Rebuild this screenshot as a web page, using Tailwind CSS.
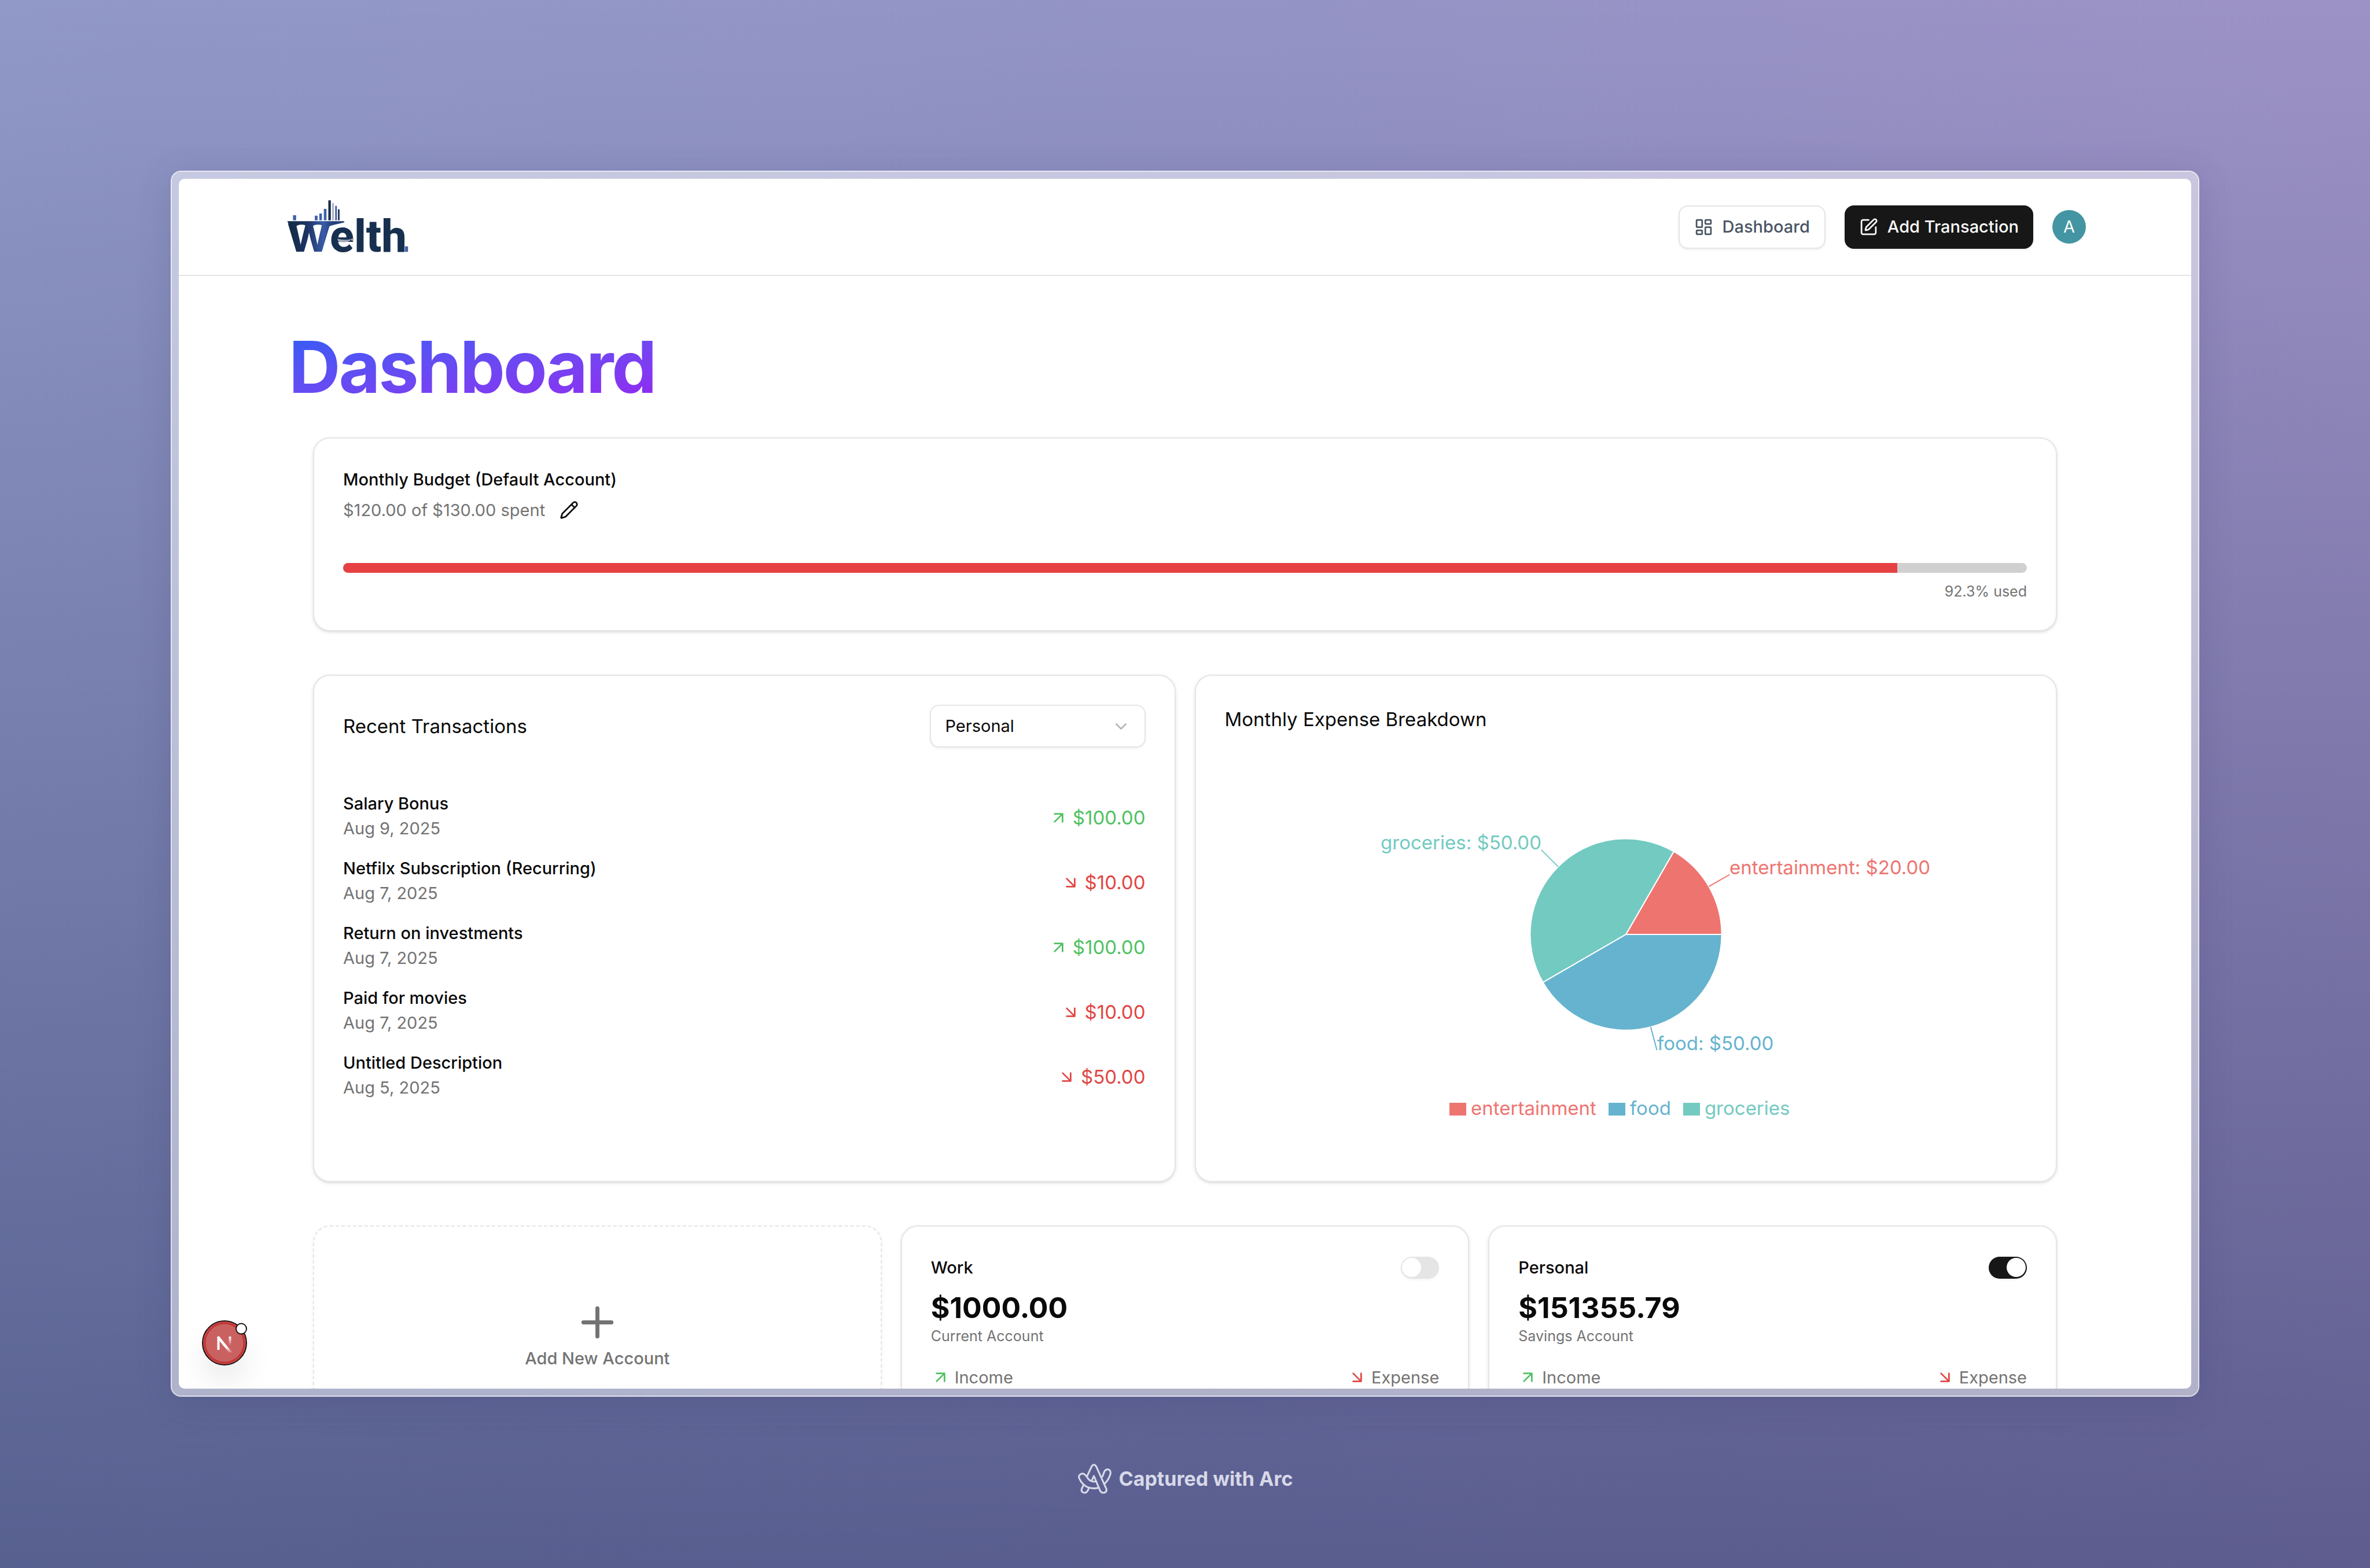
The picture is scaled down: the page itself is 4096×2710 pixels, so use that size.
<!DOCTYPE html>
<html lang="en">
<head>
<meta charset="utf-8">
<title>Welth – Dashboard</title>
<script src="https://cdn.jsdelivr.net/npm/@tailwindcss/browser@4"></script>
</head>
<body class="font-['Inter',sans-serif] text-[#0a0a0a]">
<svg class="hidden">
  <symbol id="up-right" viewBox="0 0 24 24"><path d="M7 7h10v10M7 17 17 7"/></symbol>
  <symbol id="down-right" viewBox="0 0 24 24"><path d="m7 7 10 10M17 7v10H7"/></symbol>
</svg>
<div class="grid h-screen grid-rows-[295px_minmax(0,1fr)_296px] bg-[linear-gradient(to_bottom,rgb(0_12_60/0),rgb(0_12_60/0.4)),linear-gradient(to_right,#9199c8,#9494c6_50%,#9d92c6)] px-[295px]">
  <div class="row-start-2 rounded-[18px] border-2 border-white/80 bg-white/50 bg-clip-padding p-3 shadow-[0_10px_60px_rgb(60_60_110/0.2)]">
    <div class="relative flex h-full flex-col overflow-hidden rounded-[10px] bg-white">

      <header class="border-b-2 border-[#e5e5e5]">
        <nav class="flex h-[166px] items-center justify-between px-[182px]">
          <a href="#" aria-label="Welth home" class="-ml-2">
            <svg class="h-[113px] w-[234px]" viewBox="0 0 870 420">
              <defs>
                <linearGradient id="w" x1="52" y1="0" x2="340" y2="0" gradientUnits="userSpaceOnUse">
                  <stop offset="0.1" stop-color="#152b4a"/><stop offset="0.45" stop-color="#1d3566"/><stop offset="0.8" stop-color="#3a5ba8"/><stop offset="1" stop-color="#24417a"/>
                </linearGradient>
              </defs>
              <g fill="#3f62a8"><path d="M87 134h20v32H87zM227 137h18v29h-18zM256 123h17v43h-17zM285 93h17v73h-17zM358 73h11v93h-11z"/></g>
              <path fill="#152b4a" d="M314 38h16v128h-16zM376 96h10v70h-10z"/>
              <path fill="#b4b4c2" d="M338 55h12v111h-12zM783 321h12v48h-12z"/>
              <path fill="#3f62a8" d="M806 334h20v35h-20z"/>
              <path fill="url(#w)" d="M51 172H416V180L340 198Q320 204 310 212H290Q280 194 248 194T206 212H182Q172 194 142 194T100 212H66Z"/>
              <text x="50" y="368" font-family="Inter, sans-serif" font-weight="700" font-size="330" fill="url(#w)">w</text>
              <text x="323" y="368" font-family="Roboto, sans-serif" font-weight="800" font-size="288" fill="#18304f">elth</text>
              <path fill="#a3a8b8" d="M372 285Q370 308 412 308Q452 306 458 290Q468 304 476 295L476 281Q436 300 372 285Z"/>
            </svg>
          </a>
          <div class="flex items-center gap-[33px]">
            <button class="flex h-[75px] items-center gap-4 rounded-2xl border-2 border-[#e5e5e5] bg-white px-[25px] text-[29px] font-medium text-gray-600 shadow-[0_2px_4px_rgb(0_0_0/0.06)]">
              <svg class="size-[33px] fill-none stroke-current stroke-2" viewBox="0 0 24 24" stroke-linecap="round" stroke-linejoin="round"><rect width="7" height="9" x="3" y="3" rx="1"/><rect width="7" height="5" x="14" y="3" rx="1"/><rect width="7" height="9" x="14" y="12" rx="1"/><rect width="7" height="5" x="3" y="16" rx="1"/></svg>
              Dashboard
            </button>
            <button class="flex h-[75px] items-center gap-4 rounded-2xl bg-[#171717] px-[25px] text-[29px] font-medium text-neutral-50 shadow-[0_2px_4px_rgb(0_0_0/0.06)]">
              <svg class="size-[33px] fill-none stroke-current stroke-2" viewBox="0 0 24 24" stroke-linecap="round" stroke-linejoin="round"><path d="M12 3H5a2 2 0 0 0-2 2v14a2 2 0 0 0 2 2h14a2 2 0 0 0 2-2v-7"/><path d="M18.375 2.625a1 1 0 0 1 3 3l-9.013 9.014a2 2 0 0 1-.853.505l-2.873.84a.5.5 0 0 1-.62-.62l.84-2.873a2 2 0 0 1 .506-.852z"/></svg>
              Add Transaction
            </button>
            <button aria-label="Account" class="size-[58px] rounded-full bg-[#4495a3] text-[29px] text-white">A</button>
          </div>
        </nav>
      </header>

      <main class="px-[190px] pt-[95px]">
        <h1 class="inline-block bg-linear-to-br from-[#2b5cf5] to-[#9226f0] bg-clip-text align-top text-[124px] leading-[124px] font-bold tracking-tight text-transparent">Dashboard</h1>

        <div class="mt-[60px] flex flex-col gap-[75px] px-[42px]">
          <section class="rounded-[29px] border-2 border-[#e5e5e5] bg-white p-[50px] shadow-[0_2px_6px_rgb(0_0_0/0.1),0_2px_4px_-2px_rgb(0_0_0/0.1)]">
            <h2 class="text-[29px] leading-[41px] font-medium">Monthly Budget (Default Account)</h2>
            <div class="mt-3 flex items-center gap-[25px]">
              <p class="text-[29px] leading-[41px] text-[#737373]">$120.00 of $130.00 spent</p>
              <button aria-label="Edit budget">
                <svg class="size-[33px] fill-none stroke-current stroke-2" viewBox="0 0 24 24" stroke-linecap="round" stroke-linejoin="round"><path d="M21.174 6.812a1 1 0 0 0-3.986-3.987L3.842 16.174a2 2 0 0 0-.5.83l-1.321 4.352a.5.5 0 0 0 .623.622l4.353-1.32a2 2 0 0 0 .83-.497z"/><path d="m15 5 4 4"/></svg>
              </button>
            </div>
            <div role="progressbar" aria-label="Budget used" aria-valuenow="92.3" class="mt-[71px] h-[17px] overflow-hidden rounded-full bg-[#d0d0d0]">
              <div class="h-full bg-[#e54142]" style="width:92.3%"></div>
            </div>
            <p class="mt-4 text-right text-[25px] leading-[33px] text-[#737373]">92.3% used</p>
          </section>

          <div class="grid grid-cols-2 gap-[33px]">
            <section class="rounded-[29px] border-2 border-[#e5e5e5] bg-white p-[50px] shadow-[0_2px_6px_rgb(0_0_0/0.1),0_2px_4px_-2px_rgb(0_0_0/0.1)]">
              <div class="flex items-center justify-between">
                <h2 class="text-[33px] leading-[50px]">Recent Transactions</h2>
                <div class="relative">
                  <select aria-label="Account" class="h-[74px] w-[373px] appearance-none rounded-2xl border-2 border-[#e5e5e5] bg-white px-[25px] text-[29px] shadow-[0_2px_4px_rgb(0_0_0/0.06)]"><option>Personal</option><option>Work</option></select>
                  <svg class="pointer-events-none absolute top-[21px] right-[26px] size-[33px] fill-none stroke-[#b4b4b4] stroke-2" viewBox="0 0 24 24" stroke-linecap="round" stroke-linejoin="round"><path d="m6 9 6 6 6-6"/></svg>
                </div>
              </div>
              <ul class="mt-[82px] flex flex-col gap-[33px]">
                <li class="flex items-center justify-between">
                  <div><p class="text-[29px] leading-[29px] font-medium">Salary Bonus</p><p class="mt-2 text-[29px] leading-[42px] text-[#737373]">Aug 9, 2025</p></div>
                  <p class="flex items-center gap-2 text-[33px] text-[#4fc162]"><svg class="size-[33px] fill-none stroke-current stroke-2" stroke-linecap="round" stroke-linejoin="round"><use href="#up-right"/></svg>$100.00</p>
                </li>
                <li class="flex items-center justify-between">
                  <div><p class="text-[29px] leading-[29px] font-medium">Netfilx Subscription (Recurring)</p><p class="mt-2 text-[29px] leading-[42px] text-[#737373]">Aug 7, 2025</p></div>
                  <p class="flex items-center gap-2 text-[33px] text-[#e04643]"><svg class="size-[33px] fill-none stroke-current stroke-2" stroke-linecap="round" stroke-linejoin="round"><use href="#down-right"/></svg>$10.00</p>
                </li>
                <li class="flex items-center justify-between">
                  <div><p class="text-[29px] leading-[29px] font-medium">Return on investments</p><p class="mt-2 text-[29px] leading-[42px] text-[#737373]">Aug 7, 2025</p></div>
                  <p class="flex items-center gap-2 text-[33px] text-[#4fc162]"><svg class="size-[33px] fill-none stroke-current stroke-2" stroke-linecap="round" stroke-linejoin="round"><use href="#up-right"/></svg>$100.00</p>
                </li>
                <li class="flex items-center justify-between">
                  <div><p class="text-[29px] leading-[29px] font-medium">Paid for movies</p><p class="mt-2 text-[29px] leading-[42px] text-[#737373]">Aug 7, 2025</p></div>
                  <p class="flex items-center gap-2 text-[33px] text-[#e04643]"><svg class="size-[33px] fill-none stroke-current stroke-2" stroke-linecap="round" stroke-linejoin="round"><use href="#down-right"/></svg>$10.00</p>
                </li>
                <li class="flex items-center justify-between">
                  <div><p class="text-[29px] leading-[29px] font-medium">Untitled Description</p><p class="mt-2 text-[29px] leading-[42px] text-[#737373]">Aug 5, 2025</p></div>
                  <p class="flex items-center gap-2 text-[33px] text-[#e04643]"><svg class="size-[33px] fill-none stroke-current stroke-2" stroke-linecap="round" stroke-linejoin="round"><use href="#down-right"/></svg>$50.00</p>
                </li>
              </ul>
            </section>

            <section class="rounded-[29px] border-2 border-[#e5e5e5] bg-white px-[50px] pt-[50px] pb-[101px] shadow-[0_2px_6px_rgb(0_0_0/0.1),0_2px_4px_-2px_rgb(0_0_0/0.1)]">
              <h2 class="text-[33px] leading-[50px]">Monthly Expense Breakdown</h2>
              <svg class="mx-auto mt-[117px] h-[460px] w-[1200px]" viewBox="-600 -230 1200 460" role="img" aria-label="Expenses by category">
                <g stroke="#fff" stroke-width="2">
                  <path fill="#ee7470" d="M0 0H165.6A165.6 165.6 0 0 0 82.8 -143.4Z"/>
                  <path fill="#73cac1" d="M0 0 82.8 -143.4A165.6 165.6 0 0 0 -143.4 82.8Z"/>
                  <path fill="#65b3cf" d="M0 0 -143.4 82.8A165.6 165.6 0 0 0 165.6 0Z"/>
                </g>
                <g fill="none" stroke-width="2">
                  <path stroke="#ee7470" d="M143.4-82.8 179.3-103.5"/>
                  <path stroke="#73cac1" d="M-117.1-117.1-146.4-146.4"/>
                  <path stroke="#65b3cf" d="M42.9 160 53.6 200"/>
                </g>
                <g font-size="33">
                  <text x="179" y="-104" fill="#ee7470">entertainment: $20.00</text>
                  <text x="-146" y="-147" text-anchor="end" fill="#73cac1">groceries: $50.00</text>
                  <text x="54" y="200" fill="#65b3cf">food: $50.00</text>
                </g>
              </svg>
              <ul class="mt-[45px] flex justify-center text-[33px] leading-[50px]">
                <li class="mr-[21px] flex items-center gap-2 text-[#ee7470]"><span class="mt-1 h-[22px] w-[29px] bg-current"></span>entertainment</li>
                <li class="mr-[21px] flex items-center gap-2 text-[#65b3cf]"><span class="mt-1 h-[22px] w-[29px] bg-current"></span>food</li>
                <li class="mr-[21px] flex items-center gap-2 text-[#73cac1]"><span class="mt-1 h-[22px] w-[29px] bg-current"></span>groceries</li>
              </ul>
            </section>
          </div>

          <div class="grid grid-cols-3 gap-[33px]">
            <button class="flex min-h-[400px] flex-col items-center rounded-[29px] border-2 border-dashed border-[#e5e5e5] bg-white pt-[124px] text-[#737373] shadow-[0_2px_6px_rgb(0_0_0/0.06)]">
              <svg class="size-[83px] fill-none stroke-current stroke-2" viewBox="0 0 24 24" stroke-linecap="round" stroke-linejoin="round"><path d="M5 12h14M12 5v14"/></svg>
              <span class="text-[29px] leading-[41px] font-medium">Add New Account</span>
            </button>
            <section class="min-h-[400px] rounded-[29px] border-2 border-[#e5e5e5] bg-white p-[50px] shadow-[0_2px_6px_rgb(0_0_0/0.1),0_2px_4px_-2px_rgb(0_0_0/0.1)]">
              <div class="flex items-center justify-between">
                <label for="work" class="text-[29px] leading-[41px] font-medium">Work</label>
                <input id="work" type="checkbox" role="switch" class="flex h-[38px] w-[66px] appearance-none items-center rounded-full border-2 border-transparent bg-[#e5e5e5] shadow-[0_2px_4px_rgb(0_0_0/0.05)] before:size-[33px] before:rounded-full before:bg-white before:content-[''] checked:bg-[#171717] checked:before:translate-x-[29px]">
              </div>
              <p class="mt-4 text-[50px] leading-[66px] font-bold">$1000.00</p>
              <p class="text-[25px] leading-[33px] text-[#737373]">Current Account</p>
              <div class="mt-[34px] flex justify-between text-[29px] leading-[41px] text-[#737373]">
                <p class="flex items-center gap-2"><svg class="size-[33px] fill-none stroke-[#4fc162] stroke-2" stroke-linecap="round" stroke-linejoin="round"><use href="#up-right"/></svg>Income</p>
                <p class="flex items-center gap-2"><svg class="size-[33px] fill-none stroke-[#e04643] stroke-2" stroke-linecap="round" stroke-linejoin="round"><use href="#down-right"/></svg>Expense</p>
              </div>
            </section>
            <section class="min-h-[400px] rounded-[29px] border-2 border-[#e5e5e5] bg-white p-[50px] shadow-[0_2px_6px_rgb(0_0_0/0.1),0_2px_4px_-2px_rgb(0_0_0/0.1)]">
              <div class="flex items-center justify-between">
                <label for="personal" class="text-[29px] leading-[41px] font-medium">Personal</label>
                <input id="personal" type="checkbox" role="switch" checked class="flex h-[38px] w-[66px] appearance-none items-center rounded-full border-2 border-transparent bg-[#e5e5e5] shadow-[0_2px_4px_rgb(0_0_0/0.05)] before:size-[33px] before:rounded-full before:bg-white before:content-[''] checked:bg-[#171717] checked:before:translate-x-[29px]">
              </div>
              <p class="mt-4 text-[50px] leading-[66px] font-bold">$151355.79</p>
              <p class="text-[25px] leading-[33px] text-[#737373]">Savings Account</p>
              <div class="mt-[34px] flex justify-between text-[29px] leading-[41px] text-[#737373]">
                <p class="flex items-center gap-2"><svg class="size-[33px] fill-none stroke-[#4fc162] stroke-2" stroke-linecap="round" stroke-linejoin="round"><use href="#up-right"/></svg>Income</p>
                <p class="flex items-center gap-2"><svg class="size-[33px] fill-none stroke-[#e04643] stroke-2" stroke-linecap="round" stroke-linejoin="round"><use href="#down-right"/></svg>Expense</p>
              </div>
            </section>
          </div>
        </div>
      </main>

      <!-- Next.js dev tools badge -->
      <button aria-label="Open Next.js dev tools" class="absolute bottom-10 left-10 size-[78px] rounded-full shadow-[0_30px_50px_rgb(0_0_0/0.08)]">
        <svg class="size-full overflow-visible" viewBox="0 0 78 78">
          <defs>
            <linearGradient id="n1" x1="0" y1="46" x2="0" y2="57" gradientUnits="userSpaceOnUse"><stop stop-color="#fff"/><stop offset="1" stop-color="#fff" stop-opacity="0"/></linearGradient>
            <linearGradient id="n2" x1="0" y1="28" x2="0" y2="43" gradientUnits="userSpaceOnUse"><stop stop-color="#fff"/><stop offset="1" stop-color="#fff" stop-opacity="0"/></linearGradient>
          </defs>
          <circle cx="39" cy="39" r="38" fill="#d14a4a" stroke="#1a1414" stroke-width="2"/>
          <circle cx="39" cy="39" r="34" fill="#ca6161" stroke="#bf3636" stroke-width="3"/>
          <path fill="none" stroke="#fff" stroke-width="4" d="M28.500 51V28"/>
          <path fill="none" stroke="url(#n1)" stroke-width="4.500" d="M27.500 28.500 50 56"/>
          <path fill="none" stroke="url(#n2)" stroke-width="4" d="M48.500 28V43"/>
          <circle cx="68" cy="14.500" r="9" fill="#fff" stroke="#1a1414" stroke-width="2"/>
        </svg>
      </button>
    </div>
  </div>

  <footer class="row-start-3 flex items-center justify-center gap-[12px] pb-[12px] text-[#d8d9e8]">
    <svg class="h-[54px] w-[60px] fill-none stroke-current" viewBox="133 124 216 194" stroke-width="11" stroke-linecap="round" stroke-linejoin="round">
      <path d="M192 207 221 145Q236 121 251 145L313 283Q318 301 300 307Q283 310 275 296L236 203 223 229"/>
      <path d="M192 207 179 194Q165 182 150 194Q139 203 144 216Q172 279 236 280Q252 280 266 276M192 207Q206 237 236 238Q244 238 249 236"/>
      <path d="M170 261 160 283Q155 300 170 306Q188 311 197 295L205 277M289 206 299 180Q306 161 322 162Q342 166 339 188Q330 222 305 249"/>
    </svg>
    <p class="text-[34px] leading-[48px] font-bold">Captured with Arc</p>
  </footer>
</div>
</body>
</html>
